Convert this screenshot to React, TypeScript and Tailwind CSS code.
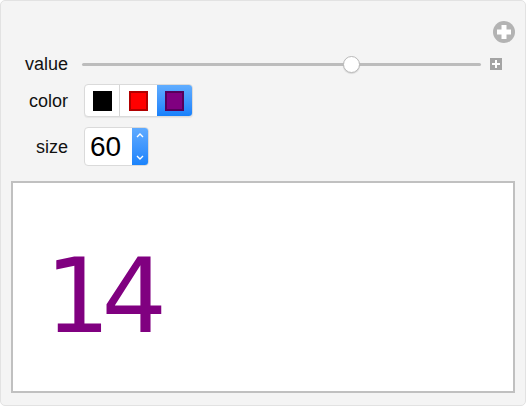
import React from "react";

const labelCls =
  "w-[67px] shrink-0 text-right text-[18px] leading-none text-[#111] font-['Liberation_Sans',Arial,sans-serif]";

function PlusCircle() {
  return (
    <svg width="22" height="22" viewBox="0 0 22 22">
      <circle cx="11" cy="11" r="11" fill="#b3b3b3" />
      <rect x="8.5" y="4" width="5" height="14" fill="#fff" />
      <rect x="4" y="8.5" width="14" height="5" fill="#fff" />
    </svg>
  );
}

function PlusSquare() {
  return (
    <svg width="12" height="12" viewBox="0 0 12 12">
      <rect width="12" height="12" fill="#a4a4a4" />
      <rect x="5" y="2" width="2" height="8" fill="#fff" />
      <rect x="2" y="5" width="8" height="2" fill="#fff" />
    </svg>
  );
}

function Slider({ value }: { value: number }) {
  return (
    <div className="relative w-[399px] h-[18px] flex items-center">
      <div className="w-full h-[3px] rounded-full bg-[#bcbcbc]" />
      <div
        className="absolute top-[1px] w-[17px] h-[17px] -ml-[8px] rounded-full bg-white border border-[#b9b9b9] shadow-[0_1px_1px_rgba(0,0,0,0.12)]"
        style={{ left: `${value * 100}%` }}
      />
    </div>
  );
}

const swatches = [
  { fill: "#000000", edge: "#000000" },
  { fill: "#ff0000", edge: "#b10000" },
  { fill: "#800080", edge: "#55005a" },
];

function ColorSetter({ selected }: { selected: number }) {
  return (
    <div className="flex h-[33px] rounded-[4px] border border-[#dadada] bg-white shadow-[0_1px_1px_rgba(0,0,0,0.06)] overflow-hidden">
      {swatches.map((s, i) => (
        <div
          key={i}
          className={
            i === selected
              ? "w-[35px] flex items-center justify-center bg-gradient-to-b from-[#60adff] to-[#1580fb]"
              : i === 0
              ? "w-[35px] flex items-center justify-center border-r border-[#d6d6d6]"
              : "w-[37px] flex items-center justify-center"
          }
        >
          <div
            className="w-[19px] h-[20px] border-2"
            style={{ background: s.fill, borderColor: s.edge }}
          />
        </div>
      ))}
    </div>
  );
}

function SizeInput({ value }: { value: number }) {
  return (
    <div className="flex h-[39px] rounded-[4px] border border-[#dadada] bg-white overflow-hidden">
      <div className="w-[47px] flex items-center pl-[5px] text-[28px] leading-none text-black font-['Liberation_Sans',Arial,sans-serif]">
        {value}
      </div>
      <div className="w-[16px] flex flex-col items-center justify-between py-[4px] bg-gradient-to-b from-[#5eaaff] to-[#1a83fb]">
        <svg width="8" height="6" viewBox="0 0 8 6">
          <path d="M1 5 L4 2 L7 5" stroke="#fff" strokeWidth="1.4" fill="none" />
        </svg>
        <svg width="8" height="6" viewBox="0 0 8 6">
          <path d="M1 1 L4 4 L7 1" stroke="#fff" strokeWidth="1.4" fill="none" />
        </svg>
      </div>
    </div>
  );
}

export default function App() {
  return (
    <div className="w-[526px] h-[408px] bg-white">
      <div className="w-[526px] h-[406px] rounded-[5px] border border-[#e2e2e2] bg-[#f4f4f4] flex flex-col">
        <div className="h-[22px] mt-[20px] flex justify-end pr-[10px]">
          <PlusCircle />
        </div>

        <div className="h-[34px] mt-[4px] flex items-center">
          <div className={labelCls}>value</div>
          <div className="ml-[14px]">
            <Slider value={0.674} />
          </div>
          <div className="ml-[9px]">
            <PlusSquare />
          </div>
        </div>

        <div className="h-[33px] mt-[3px] flex items-center">
          <div className={labelCls}>color</div>
          <div className="ml-[16px]">
            <ColorSetter selected={2} />
          </div>
        </div>

        <div className="h-[39px] mt-[10px] flex items-center">
          <div className={labelCls}>size</div>
          <div className="ml-[16px]">
            <SizeInput value={60} />
          </div>
        </div>

        <div className="mt-[15px] ml-[10px] w-[504px] h-[212px] border-2 border-[#c0c0c0] bg-white pl-[32px] pt-[62px]">
          <div className="text-[103px] leading-none tracking-[-9px] text-[#800080] font-['DejaVu_Sans',Verdana,sans-serif]">
            14
          </div>
        </div>
      </div>
    </div>
  );
}
